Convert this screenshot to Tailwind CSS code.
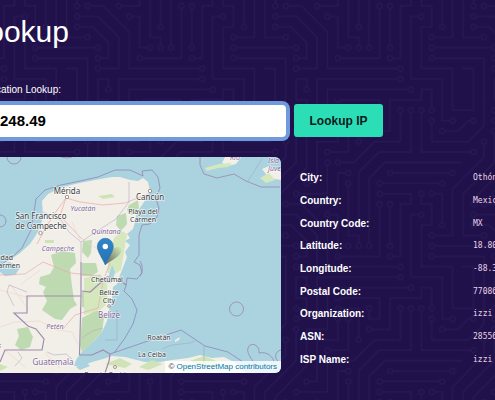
<!DOCTYPE html>
<html lang="en">
<head>
    <meta charset="UTF-8">
    <meta name="viewport" content="width=device-width, initial-scale=1.0">
    <title>IP Lookup</title>
    <script src="https://cdn.jsdelivr.net/npm/@tailwindcss/browser@4"></script>
</head>
<body class="relative min-h-screen overflow-hidden bg-[#20114b] font-['Liberation_Sans',Arial,sans-serif] text-white">

    <!-- Circuit board background -->
    <svg class="absolute inset-0 -z-10 h-full w-full" aria-hidden="true">
        <defs>
            <pattern id="circuit" width="304" height="304" patternUnits="userSpaceOnUse" patternTransform="translate(66 -99) scale(.652)">
                <path fill="#281955" d="M44.1 224a5 5 0 1 1 0 2H0v-2h44.1zm160 48a5 5 0 1 1 0 2H82v-2h122.1zm57.8-46a5 5 0 1 1 0-2H304v2h-42.1zm0 16a5 5 0 1 1 0-2H304v2h-42.1zm6.2-114a5 5 0 1 1 0 2h-86.2a5 5 0 1 1 0-2h86.2zm-256-48a5 5 0 1 1 0 2H0v-2h12.1zm185.8 34a5 5 0 1 1 0-2h86.2a5 5 0 1 1 0 2h-86.2zM258 12.1a5 5 0 1 1-2 0V0h2v12.1zm-64 208a5 5 0 1 1-2 0v-54.2a5 5 0 1 1 2 0v54.2zm48-198.2V80h62v2h-64V21.9a5 5 0 1 1 2 0zm16 16V64h46v2h-48V37.9a5 5 0 1 1 2 0zm-128 96V208h16v12.1a5 5 0 1 1-2 0V210h-16v-76.1a5 5 0 1 1 2 0zm-5.9-21.9a5 5 0 1 1 0 2H114v48H85.9a5 5 0 1 1 0-2H112v-48h12.1zm-6.2 130a5 5 0 1 1 0-2H176v-74.1a5 5 0 1 1 2 0V242h-60.1zm-16-64a5 5 0 1 1 0-2H114v48h10.1a5 5 0 1 1 0 2H112v-48h-10.1zM66 284.1a5 5 0 1 1-2 0V274H50v30h-2v-32h18v12.1zM236.1 176a5 5 0 1 1 0 2H226v94h48v32h-2v-30h-48v-98h12.1zm25.8-30a5 5 0 1 1 0-2H274v44.1a5 5 0 1 1-2 0V146h-10.1zm-64 96a5 5 0 1 1 0-2H208v-80h16v-14h-42.1a5 5 0 1 1 0-2H226v18h-16v80h-12.1zm86.2-210a5 5 0 1 1 0 2H272V0h2v32h10.1zM98 101.9V146H53.9a5 5 0 1 1 0-2H96v-42.1a5 5 0 1 1 2 0zM53.9 34a5 5 0 1 1 0-2H80V0h2v34H53.9zm60.1 3.9V66H82v64H69.9a5 5 0 1 1 0-2H80V64h32V37.9a5 5 0 1 1 2 0zM101.9 82a5 5 0 1 1 0-2H128V37.9a5 5 0 1 1 2 0V82h-28.1zm16-64a5 5 0 1 1 0-2H146v44.1a5 5 0 1 1-2 0V18h-26.1zm102.2 270a5 5 0 1 1 0 2H98v14h-2v-16h124.1zM242 149.9V160h16v34h-16v62h48v48h-2v-46h-48v-66h16v-30h-16v-12.1a5 5 0 1 1 2 0zM53.9 18a5 5 0 1 1 0-2H64V2H48V0h18v18H53.9zm112 32a5 5 0 1 1 0-2H192V0h50v2h-48v48h-28.1zm-48-48a5 5 0 0 1-9.8-2H178v34h-18V21.9a5 5 0 1 1 2 0V32h14V2h-58.1zm0 96a5 5 0 1 1 0-2H137l32-32h39V21.9a5 5 0 1 1 2 0V66h-40.17l-32 32H117.9zm28.1 90.1a5 5 0 1 1-2 0v-76.51L175.59 80H224V21.9a5 5 0 1 1 2 0V82h-49.59L146 112.41v75.69zm16 32a5 5 0 1 1-2 0v-99.51L184.59 96H304v2H185.41L162 121.41v98.69zm-144-64a5 5 0 1 1-2 0v-3.51l48-48V48h32V0h2v50H66v55.41l-48 48v2.69zM50 53.9v43.51l-48 48V208h26.1a5 5 0 1 1 0 2H0v-65.41l48-48V53.9a5 5 0 1 1 2 0zm-16 16V89.41l-34 34v-2.82l32-32V69.9a5 5 0 1 1 2 0zM12.1 32a5 5 0 1 1 0 2H9.41L0 43.41V40.6L8.59 32h3.51zm265.8 18a5 5 0 1 1 0-2h18.69l7.41-7.41v2.82L297.41 50H277.9zm-16 160a5 5 0 1 1 0-2H288v-71.41l16-16v2.82l-14 14V210h-28.1zm-208 32a5 5 0 1 1 0-2H64v-22.59L40.59 194H21.9a5 5 0 1 1 0-2H41.41L66 216.59V242H53.9zm150.2 14a5 5 0 1 1 0 2H96v-56.6L56.6 162H37.9a5 5 0 1 1 0-2h19.5L98 200.6V256h106.1zm-150.2 2a5 5 0 1 1 0-2H80v-46.59L48.59 178H21.9a5 5 0 1 1 0-2H49.41L82 208.59V258H53.9zM34 39.8v1.61L9.41 66H0v-2h8.59L32 40.59V0h2v39.8zM0 256h18v48h-2v-46H0zM34 241v63h-2v-62H0v-2h34v1zM17 18H0v-2h16V0h2v18h-1zm273-2h14v2h-16V0h2v16zm-32 273v15h-2v-14h-14v14h-2v-16h18v1zM80 272h2v32h-2v-32z"/>
                <!-- open centres of the pads -->
                <path stroke="#20114b" stroke-width="6" stroke-linecap="round" d="M49 225h0M209 273h0M257 225h0M257 241h0M273 129h0M177 129h0M17 81h0M193 113h0M289 113h0M257 17h0M193 225h0M193 161h0M241 17h0M257 33h0M129 129h0M145 225h0M129 113h0M81 161h0M113 241h0M177 161h0M97 177h0M129 225h0M65 289h0M241 177h0M257 145h0M273 193h0M193 241h0M177 145h0M289 33h0M97 97h0M49 145h0M49 33h0M113 33h0M65 129h0M97 81h0M129 33h0M113 17h0M145 65h0M225 289h0M241 145h0M49 17h0M161 49h0M113 1h0M161 17h0M113 97h0M209 17h0M145 193h0M225 17h0M161 225h0M17 161h0M49 49h0M33 209h0M33 65h0M17 33h0M273 49h0M257 209h0M49 241h0M17 193h0M209 257h0M33 161h0M49 257h0M17 177h0"/>
            </pattern>
        </defs>
        <rect width="100%" height="100%" fill="url(#circuit)"/>
    </svg>

    <main class="pt-3">
        <h1 class="flex w-[69px] justify-end text-3xl leading-10">Lookup</h1>

        <!-- Search form -->
        <form class="mt-8" onsubmit="return false">
            <label for="ip" class="flex w-[61px] justify-end text-[10px] leading-3 whitespace-nowrap">IP Geolocation Lookup:</label>
            <div class="mt-2 mr-28 flex items-center gap-2">
                <input id="ip" type="text" value="248.49" class="h-8 min-w-0 flex-1 rounded-r-sm bg-white text-[15px] font-bold text-black ring-4 ring-[#709adb] outline-none">
                <button type="submit" class="h-[33px] w-[89px] rounded-[3px] bg-[#2bdeb5] text-xs font-bold text-[#0c1a20]">Lookup IP</button>
            </div>
        </form>

        <!-- Result -->
        <section class="mt-5 flex gap-[19px]">
            <div class="relative h-[216px] min-w-0 flex-1 overflow-hidden rounded-r-md bg-[#aad3df]">
                <svg class="h-full w-full" viewBox="0 157 281 216" preserveAspectRatio="xMaxYMid slice" font-family="'Noto Sans',sans-serif" role="img" aria-label="Map">
                    <!-- land -->
                    <path fill="#f2efe9" d="M0 264 10 260 20 253 30 244 36 235 40 228 43 216 42 201 48 194 60 188 75 184 95 180 112 177 120 177 130 180 138 181 143 178 148 182 150 191 147 197 142 205 137 212 135 222 133 229 127 234 130 238 125 241 130 245 125 252 127 257 124 265 120 275 117 284 113 287 112 300 109 310 107 321 102 332 95 340 86 348 80 354 76 360 74 366 82 366 92 362 103 359 112 356 125 357 145 362 160 362 172 360 188 358 200 355 212 358 224 357 236 363 246 373H0Z"/>
                    <!-- forests and parks -->
                    <g fill="#bddab1">
                        <path d="M51 255 62 251 75 253 76 263 70 269 72 286 74 300 77 305 70 309 62 320 55 319 42 310 47 301 43 292 46 287 39 284 40 277 50 274 54 267Z"/>
                        <path d="M17 329 28 327 33 337 30 347 21 350 15 345 19 336ZM83 241 92 240 91 253 88 258 82 252ZM117 216 126 213 127 224 121 231 116 225ZM129 205 138 200 139 208 132 215 127 210ZM82 263h14l2 9-7 4h-9ZM82 318 97 310 104 318 102 332 92 343 82 352 80 345ZM82 292 96 290 98 303 90 309 82 307Z"/>
                        <path fill="#d5e8bd" d="M114 238 122 231 127 234 124 252 121 270 112 276 107 272 109 258ZM84 278 100 274 107 282 108 303 100 310 84 315Z"/>
                        <path fill="#cfe3b6" d="M0 364 8 367 0 371ZM105 364 120 358 132 364 125 368ZM139 367 152 360 163 364 148 370ZM190 361 204 356 219 362 212 370 200 366ZM45 240h9v3h-9ZM98 196l14-2 3 3-12 2Z"/>
                    </g>
                    <path fill="#aad3df" d="M0 264 10 262 20 268 15 275 5 276 0 272ZM112 265 115 272 112 283 106 283 109 275ZM76 367 86 362 90 366 80 370Z"/>
                    <!-- islands -->
                    <path fill="#f2efe9" d="M222 163 225 157 241 157 236 164 228 166ZM262 169 269 166 276 169 281 172v8l-12-2ZM175 340l5-3-1 3-4 2Z"/>
                    <path fill="#d5e8bd" d="M205 168 219 164 232 163 228 167 218 168 207 171ZM260 178 269 173 275 180 266 183Z"/>
                    <!-- roads -->
                    <g fill="none" stroke="#eaa9ad" stroke-width=".7">
                        <path d="M37 244 46 227 55 213 66 198 80 202 103 205 125 203 148 194M66 198 60 216 82 239M0 275 25 274 43 262 70 273 100 276M104 277 98 308 75 315 62 330M110 263 105 276"/>
                        <path stroke="#ecd6cf" d="M0 327 15 322 40 321 56 330 72 332 78 345M10 284 25 305M5 350 25 367M45 353 60 368M80 240 72 222M82 239 104 253M40 270 20 285M0 290 30 298"/>
                    </g>
                    <!-- borders -->
                    <g fill="none" stroke="#9b86ab" stroke-width=".8">
                        <path stroke-width="1.2" stroke="#a08cad" d="M0 362 5 350H42L44 339 36 329 28 326 14 313H27V296H81M81 262V297L79.500 355M82 291 90 292 98 285 107 277 118 279 126 285M79.500 355 92 355 103 350 110 354 109 361 105 373"/>
                        <path stroke="#8f86b8" d="M0 265 10 259 22 248 31 230 34 212 36 199 45 190 61 185 80 181 98 177 115 170 130 170 143 176 142 171 152 170 158 177 160 188 156 199 159 208 157 217 150 224 142 225 139 235 139 255 134 262 140 265 142 273 137 279 127 278 126 286 124 291 132 299 137 310 133 324 125 338 114 353M110 354 148 341 181 330 205 346 228 352 243 362"/>
                        <path d="M200 157 200 165 204 174 217 178 234 174 246 181 261 187 280 187M7 157A7 7 0 1 0 21 157M0 215A6 6 0 0 1 0 227M61 157 67 158 72 157M140 261C143 266 143 272 140 276"/>
                        <circle cx="236.500" cy="309" r="7"/>
                        <path d="M255 365C251 357 245 352 249 346C253 342 260 346 259 353C267 351 274 357 274 363M281 350C275 351 274 358 278 361"/>
                        <path stroke="#9fa9c4" stroke-width=".6" d="M248 181 262 159M105 340H117V310M162 349 172 345 190 343 195 341M204 346V364"/>
                        <path stroke="#bba9bf" stroke-width=".6" d="M43 212 61 220 69 232 81 242 94 233 116 219 129 202V182M81 242V262M82 338 92 331 103 328M27 292 9 285 7 292 14 306M18 352 22 358 15 366M47 352 54 355 66 354 72 359"/>
                    </g>
                    <g fill="#fff" stroke="#8b7d75" stroke-width=".8">
                        <circle cx="67" cy="197" r="1.700"/>
                        <circle cx="40.500" cy="233" r="1.700"/>
                        <circle cx="150" cy="191" r="1.700"/>
                        <circle cx="109" cy="306" r="1.300"/>
                        <circle cx="115" cy="367" r="1.500"/>
                    </g>
                    <!-- place names -->
                    <g fill="#3c3c3c" stroke="#fff" stroke-opacity=".7" stroke-width="1.500" paint-order="stroke" text-anchor="middle" font-size="7">
                        <text x="67" y="194" font-size="8">Mérida</text>
                        <text x="41" y="219" font-size="8">San Francisco</text>
                        <text x="41" y="229" font-size="8">de Campeche</text>
                        <text x="150" y="200" font-size="8">Cancún</text>
                        <text x="143" y="214">Playa del</text>
                        <text x="143" y="222">Carmen</text>
                        <text x="13" y="260" text-anchor="end">Ciudad</text>
                        <text x="20" y="268" text-anchor="end">Carmen</text>
                        <text x="107" y="282">Chetumal</text>
                        <text x="109" y="295">Belize</text>
                        <text x="109" y="303">City</text>
                        <text x="159" y="340">Roatán</text>
                        <text x="152" y="357">La Ceiba</text>
                        <text x="107" y="377">Puerto Cortés</text>
                    </g>
                    <g fill="#84689a" stroke="#fff" stroke-opacity=".6" stroke-width="1.200" paint-order="stroke" text-anchor="middle" font-size="7" font-style="italic">
                        <text x="83" y="211">Yucatán</text>
                        <text x="106" y="234">Quintana</text>
                        <text x="58" y="251">Campeche</text>
                        <text x="55" y="329">Petén</text>
                        <text x="268" y="163" text-anchor="start">Isla de la</text>
                        <text x="268" y="171" text-anchor="start">Juventud</text>
                        <text x="235" y="160">Río</text>
                        <text x="1" y="348" text-anchor="end">Chiapas</text>
                    </g>
                    <g fill="#84689a" stroke="#fff" stroke-opacity=".6" stroke-width="1.200" paint-order="stroke" text-anchor="middle" font-size="8">
                        <text x="109" y="318">Belize</text>
                        <text x="53" y="365">Guatemala</text>
                    </g>
                    <!-- marker -->
                    <defs>
                        <linearGradient id="shade" x1="0" y1="1" x2="1" y2="0"><stop offset="0" stop-color="#000" stop-opacity=".6"/><stop offset="1" stop-color="#000" stop-opacity="0"/></linearGradient>
                        <linearGradient id="pin" x2="0" y2="1"><stop stop-color="#2f86c9"/><stop offset="1" stop-color="#2473b3"/></linearGradient>
                    </defs>
                    <path fill="url(#shade)" d="M105 265 112 250C116 245 123 247 121 252C119 257 112 260 105 265Z"/>
                    <path fill="url(#pin)" stroke="#2a6fa8" stroke-width=".6" d="M105.300 265C103 259 97.300 252 97.300 246.300A8 8 0 0 1 113.300 246.300C113.300 252 107.600 259 105.300 265Z"/>
                    <circle cx="105.300" cy="246.500" r="2.700" fill="#fff"/>
                </svg>
                <p class="absolute right-0 bottom-0 bg-white/80 pr-1 pl-[3px] text-[8px] leading-3 text-[#333]">© <a href="https://www.openstreetmap.org/copyright" class="text-[#0078a8]">OpenStreetMap contributors</a></p>
            </div>

            <dl class="grid w-[195px] shrink-0 auto-rows-fr grid-cols-[173px_minmax(0,1fr)] items-center overflow-hidden pt-2.5 pb-0.5 text-[11px] leading-4 whitespace-nowrap [&_dd]:font-['DejaVu_Sans_Mono',monospace] [&_dd]:text-[8px] [&_dd]:text-[#ecd3e6] [&_dt]:text-[10px] [&_dt]:font-bold">
                <dt>City:</dt><dd>Othón P. Blanco</dd>
                <dt>Country:</dt><dd>Mexico</dd>
                <dt>Country Code:</dt><dd>MX</dd>
                <dt>Latitude:</dt><dd>18.80</dd>
                <dt>Longitude:</dt><dd>-88.3</dd>
                <dt>Postal Code:</dt><dd>77086</dd>
                <dt>Organization:</dt><dd>izzi</dd>
                <dt>ASN:</dt><dd>28556</dd>
                <dt>ISP Name:</dt><dd>izzi</dd>
            </dl>
        </section>
    </main>
</body>
</html>
